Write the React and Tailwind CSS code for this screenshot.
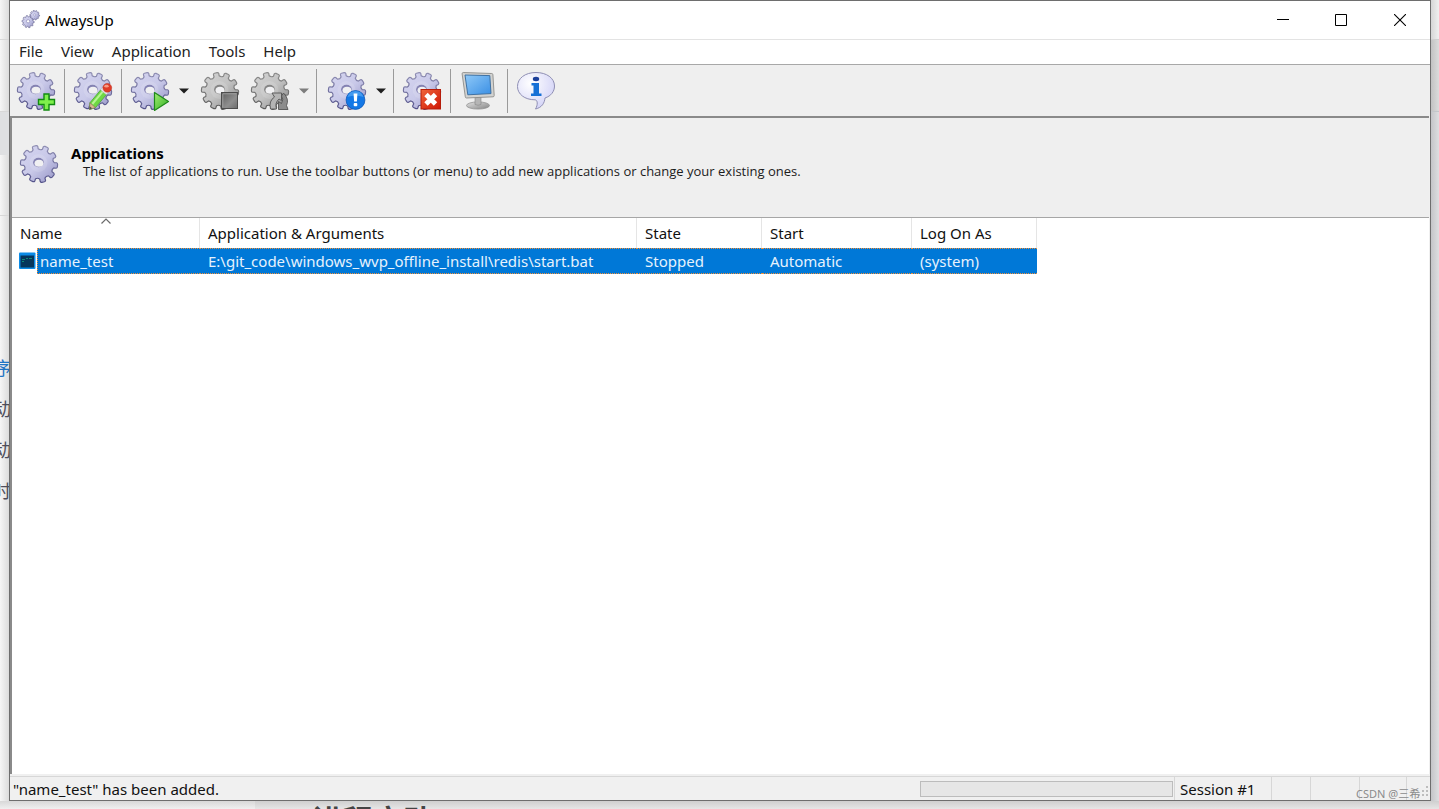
import { useState } from 'react'

const columns = [
  { key: 'name', label: 'Name', cls: 'w-[188px]' },
  { key: 'path', label: 'Application & Arguments', cls: 'w-[437px]' },
  { key: 'state', label: 'State', cls: 'w-[125px]' },
  { key: 'start', label: 'Start', cls: 'w-[150px]' },
  { key: 'logon', label: 'Log On As', cls: 'w-[125px]' },
]

const apps = [
  {
    name: 'name_test',
    path: 'E:\\git_code\\windows_wvp_offline_install\\redis\\start.bat',
    state: 'Stopped',
    start: 'Automatic',
    logon: '(system)',
  },
]

// outline of a ten-toothed wheel around (20,20)
const gearPath = (() => {
  const teeth = 10
  const step = 360 / teeth
  const pt = (r, deg) => {
    const a = (deg * Math.PI) / 180
    return `${(20 + r * Math.cos(a)).toFixed(2)} ${(20 + r * Math.sin(a)).toFixed(2)}`
  }
  let d = ''
  for (let i = 0; i < teeth; i++) {
    const a = i * step - 103
    d += `${i ? 'L' : 'M'}${pt(15.2, a - 10)} L${pt(17.6, a - 9)} Q${pt(18.6, a - 8)} ${pt(18.6, a - 4)} L${pt(18.6, a + 4)} Q${pt(18.6, a + 8)} ${pt(17.6, a + 9)} L${pt(15.2, a + 10)} Q${pt(13.6, a + 18)} ${pt(15.2, a + 26)} `
  }
  return d + 'Z'
})()

function Gear({ gray, children }) {
  const fill = gray ? 'url(#gearGray)' : 'url(#gearBlue)'
  const edge = gray ? 'url(#edgeGray)' : 'url(#edgeBlue)'
  return (
    <svg viewBox="0 0 40 40" className="size-10" aria-hidden="true">
      <path d={gearPath} fill={fill} stroke={edge} strokeWidth="1.2" strokeLinejoin="round" />
      <circle cx="19.5" cy="19" r="9" fill="#fff" fillOpacity="0.12" />
      <ellipse cx="19.5" cy="18.5" rx="5.4" ry="4.7" fill={gray ? '#858585' : '#8482b2'} />
      <ellipse cx="20" cy="19.3" rx="4.5" ry="3.5" fill="#f0f0f2" />
      {children}
    </svg>
  )
}

function Defs() {
  return (
    <svg className="absolute size-0" aria-hidden="true">
      <defs>
        <linearGradient id="gearBlue" x1="0" y1="0" x2="1" y2="1">
          <stop offset="0" stopColor="#d6d6f0" />
          <stop offset="0.5" stopColor="#c9c9e9" />
          <stop offset="1" stopColor="#9392c4" />
        </linearGradient>
        <linearGradient id="gearGray" x1="0" y1="0" x2="1" y2="1">
          <stop offset="0" stopColor="#d6d6d6" />
          <stop offset="0.5" stopColor="#c2c2c2" />
          <stop offset="1" stopColor="#868686" />
        </linearGradient>
        <linearGradient id="edgeBlue" x1="0" y1="0" x2="0" y2="1">
          <stop offset="0" stopColor="#9190b4" />
          <stop offset="1" stopColor="#54538a" />
        </linearGradient>
        <linearGradient id="edgeGray" x1="0" y1="0" x2="0" y2="1">
          <stop offset="0" stopColor="#8e8e8e" />
          <stop offset="1" stopColor="#5c5c5c" />
        </linearGradient>
        <linearGradient id="green" x1="0" y1="0" x2="1" y2="1">
          <stop offset="0" stopColor="#a4ee74" />
          <stop offset="1" stopColor="#2fae22" />
        </linearGradient>
        <linearGradient id="screen" x1="0" y1="0" x2="1" y2="1">
          <stop offset="0" stopColor="#8fc9f8" />
          <stop offset="1" stopColor="#3a8fe4" />
        </linearGradient>
        <linearGradient id="metal" x1="0" y1="0" x2="1" y2="1">
          <stop offset="0" stopColor="#e2e2e2" />
          <stop offset="1" stopColor="#858585" />
        </linearGradient>
        <linearGradient id="square" x1="0" y1="0" x2="1" y2="1">
          <stop offset="0" stopColor="#5e5e5e" />
          <stop offset="0.6" stopColor="#8f8f8f" />
          <stop offset="1" stopColor="#6c6c6c" />
        </linearGradient>
        <linearGradient id="red" x1="0" y1="0" x2="1" y2="1">
          <stop offset="0" stopColor="#f0653c" />
          <stop offset="1" stopColor="#cf1604" />
        </linearGradient>
        <radialGradient id="bubble" cx="0.35" cy="0.3" r="0.8">
          <stop offset="0" stopColor="#ffffff" />
          <stop offset="1" stopColor="#cfcff6" />
        </radialGradient>
      </defs>
    </svg>
  )
}

const AddIcon = () => (
  <Gear>
    <path d="M28 23h5v5.500h5.500v5h-5.500v5.500h-5v-5.500h-5.500v-5h5.500z" fill="#7ff04c" stroke="#128a12" strokeWidth="1.400" />
  </Gear>
)

const EditIcon = () => (
  <Gear>
    <path d="M16.500 38.500l.4-6.700 11.300-13.500 5.600 4.800-11.300 13.500z" fill="#6fd944" stroke="#4aa636" strokeWidth="0.800" />
    <path d="M19.300 33l11.200-13.300" stroke="#b8f494" strokeWidth="2" />
    <path d="M16.500 38.500l.4-6.700 5.600 4.800z" fill="#d9b98e" stroke="#80705c" strokeWidth="0.600" />
    <path d="M16.500 38.500l.2-3 2.500 1.800z" fill="#4b4b4b" />
    <path d="M27.500 18.800l2.600-3.100 5.900 5-2.600 3.100z" fill="#e8e8ec" stroke="#b0b0b8" strokeWidth="0.500" />
    <circle cx="34.300" cy="16.800" r="4.400" fill="#e03c28" stroke="#b72a1c" strokeWidth="0.500" />
    <ellipse cx="33.500" cy="15.200" rx="2.200" ry="1.400" fill="#f69a86" />
  </Gear>
)

const StartIcon = () => (
  <Gear>
    <path d="M24.500 21.500l14 9-14 9z" fill="url(#green)" stroke="#1f8a1a" strokeWidth="1.200" strokeLinejoin="round" />
  </Gear>
)

const StopIcon = () => (
  <Gear gray>
    <rect x="21.500" y="21.500" width="16" height="16" fill="url(#square)" stroke="#4d4d4d" />
    <path d="M22.800 36.300V22.800h13.500" fill="none" stroke="#aaa" strokeWidth="0.800" />
  </Gear>
)

const RestartIcon = () => (
  <Gear gray>
    <path d="M20.500 38q-2-8 4-12l-2.500-4h9.500v7.500l-2.500-1.500q-4.500 4-2.500 10z" fill="#b4b4b4" stroke="#555" strokeWidth="0.900" />
    <path d="M33.500 22q6 6 3 12.500l1.500 4h-9.500v-8l3 2q2.500-4 0-7.500z" fill="#8c8c8c" stroke="#555" strokeWidth="0.900" />
  </Gear>
)

const InfoIcon = () => (
  <Gear>
    <circle cx="28.500" cy="29" r="9.400" fill="#1478e6" stroke="#0a57b8" strokeWidth="0.800" />
    <path d="M20.500 26a8.300 8.300 0 0 1 16 0q-8-2.500-16 0z" fill="#63b0f7" fillOpacity="0.600" />
    <path d="M26.600 22.500h3.800l-.5 8h-2.800z" fill="#fff" />
    <rect x="26.700" y="32" width="3.600" height="3.200" rx="1" fill="#fff" />
  </Gear>
)

const RemoveIcon = () => (
  <Gear>
    <rect x="19" y="18.500" width="19.500" height="19.500" fill="url(#red)" stroke="#b51c0a" />
    <path d="M24 23.500l9.500 9.500M33.500 23.500l-9.500 9.500" stroke="#fff" strokeWidth="4.800" />
  </Gear>
)

const MonitorIcon = () => (
  <svg viewBox="0 0 40 40" className="size-10" aria-hidden="true">
    <ellipse cx="19" cy="34.500" rx="11.500" ry="3.600" fill="url(#metal)" stroke="#8a8a8a" strokeWidth="0.700" />
    <path d="M16 26h6v7.500q-3 1.500-6 0z" fill="#b5b5b5" stroke="#858585" strokeWidth="0.600" />
    <path d="M4.200 1.500l28.600 1q1 .1 1.100 1.100l1.300 20.900q0 1.200-1.100 1.300l-26.600 1.200q-1.100 0-1.200-1.200l-3.200-23q0-1.200 1.100-1.300z" fill="#d2d2d0" stroke="#8c8c8a" strokeWidth="0.900" />
    <path d="M6 4l24.800.6 1.200 18-23.200 1.200z" fill="url(#screen)" stroke="#35699c" strokeWidth="0.900" />
  </svg>
)

const HelpIcon = () => (
  <svg viewBox="0 0 40 40" className="size-10" aria-hidden="true">
    <path
      d="M20 1.500C9 1.500 1.500 7.300 1.500 15.500c0 7.500 7 13.300 17.500 13.300 2.800.2 3 5 .5 9.200 6.500-1.500 9-6 9.500-11C35 25 38.500 20.500 38.500 15 38.500 7 30.500 1.500 20 1.500z"
      fill="url(#bubble)"
      stroke="#8f8fb4"
      strokeWidth="1"
    />
    <ellipse cx="20" cy="8" rx="3.200" ry="2.200" fill="#1c3f9a" />
    <path d="M15.500 12h7.500v10.500h2.500v2.500h-10.500v-2.500h2.500v-8h-2z" fill="#1670d6" />
  </svg>
)

const AppIcon = () => (
  <svg viewBox="0 0 20 20" className="size-5" aria-hidden="true">
    <g transform="translate(0.500 5) scale(0.330)">
      <path d={gearPath} fill="url(#gearBlue)" stroke="#66658f" strokeWidth="2" />
      <circle cx="20" cy="19" r="5" fill="#fff" stroke="#8684b4" strokeWidth="2" />
    </g>
    <g transform="translate(8.500 0) scale(0.260)">
      <path d={gearPath} fill="url(#gearBlue)" stroke="#66658f" strokeWidth="2.500" />
      <circle cx="20" cy="19" r="4" fill="#fff" stroke="#8684b4" strokeWidth="2" />
    </g>
  </svg>
)

const BatIcon = () => (
  <svg viewBox="0 0 18 18" className="size-[18px] shrink-0" aria-hidden="true">
    <rect x="1" y="0.500" width="16.500" height="16.500" rx="1" fill="#0b8be6" />
    <rect x="2.500" y="3.500" width="13.500" height="12" fill="#06365c" />
    <path d="M4 7.500h3M8 6.500h2M11 6.500h3M4 9.500h2" stroke="#0f8a78" strokeWidth="1" />
  </svg>
)

const ToolButton = ({ label, disabled, children, className = '' }) => (
  <button type="button" aria-label={label} disabled={disabled} className={`size-10 shrink-0 ${className}`}>
    {children}
  </button>
)

const Caret = ({ label, disabled }) => (
  <button type="button" aria-label={label} disabled={disabled} className="ml-1.5 flex h-10 w-4 shrink-0 items-center justify-center">
    <svg viewBox="0 0 10 6" className="h-1.5 w-2.5" aria-hidden="true">
      <path d="M0 0.500h10L5 5.500z" fill={disabled ? '#7d7d7d' : '#1f1f1f'} />
    </svg>
  </button>
)

const Divider = ({ className = 'mx-2' }) => <div className={`h-11 w-px shrink-0 bg-[#9a9a9a] ${className}`} />

function TitleBar() {
  return (
    <header className="flex h-[39px] shrink-0 items-center border-b border-[#e3e3e3] bg-white pb-px pl-[11px] pr-px">
      <AppIcon />
      <h1 className="ml-1 flex-1 text-[15px] leading-5 text-black">AlwaysUp</h1>
      <button type="button" aria-label="Minimize" className="flex h-full w-[58px] items-center justify-center">
        <svg viewBox="0 0 12 12" className="size-3"><path d="M0 5.500h12" stroke="#000" /></svg>
      </button>
      <button type="button" aria-label="Maximize" className="flex h-full w-[58px] items-center justify-center">
        <svg viewBox="0 0 12 12" className="size-3"><path d="M.5.5h11v11H.5z" fill="none" stroke="#000" /></svg>
      </button>
      <button type="button" aria-label="Close" className="flex h-full w-[59px] items-center justify-center">
        <svg viewBox="0 0 12 12" className="size-3"><path d="M0 0l12 12M12 0L0 12" stroke="#000" strokeWidth="1.100" /></svg>
      </button>
    </header>
  )
}

function Toolbar() {
  return (
    <div className="flex h-[51px] shrink-0 items-center bg-[#efefef] pl-1.5 pt-px">
      <ToolButton label="Add application"><AddIcon /></ToolButton>
      <Divider />
      <ToolButton label="Edit application"><EditIcon /></ToolButton>
      <Divider className="mx-2" />
      <ToolButton label="Start"><StartIcon /></ToolButton>
      <Caret label="Start options" />
      <ToolButton label="Stop" disabled className="ml-2"><StopIcon /></ToolButton>
      <ToolButton label="Restart" disabled className="ml-2.5"><RestartIcon /></ToolButton>
      <Caret label="Restart options" disabled />
      <Divider className="ml-1 mr-2.5" />
      <ToolButton label="Report activity"><InfoIcon /></ToolButton>
      <Caret label="Report options" />
      <Divider className="ml-1 mr-2" />
      <ToolButton label="Remove application"><RemoveIcon /></ToolButton>
      <Divider />
      <ToolButton label="Switch session"><MonitorIcon /></ToolButton>
      <Divider className="mx-2" />
      <ToolButton label="Help"><HelpIcon /></ToolButton>
    </div>
  )
}

function AppTable() {
  const [selected, setSelected] = useState(0)
  return (
    <table className="w-[1025px] table-fixed border-separate border-spacing-0 text-left text-[15px] leading-5">
      <thead>
        <tr className="h-[30px]">
          {columns.map((c, i) => (
            <th key={c.key} scope="col" className={`relative border-r border-[#e5e5e5] px-2 py-0 font-normal text-[#111] ${c.cls}`}>
              {c.label}
              {i === 0 && (
                <svg viewBox="0 0 10 6" className="absolute left-1/2 top-0 h-1.5 w-2.5 -translate-x-1/2" aria-hidden="true">
                  <path d="M.5 5.500L5 1l4.500 4.500" fill="none" stroke="#6b6b6b" strokeWidth="1.200" />
                </svg>
              )}
            </th>
          ))}
        </tr>
      </thead>
      <tbody>
        {apps.map((app, row) => (
          <tr key={app.name} onClick={() => setSelected(row)} className="h-[26px]">
            {columns.map((c, i) => {
              const on = selected === row
              const look = on ? 'border-y border-dotted border-[#f0903a] bg-[#0078d7] text-[#e6f2fd]' : 'text-[#111]'
              return i === 0 ? (
                <td key={c.key} className="p-0">
                  <div className="flex h-[26px] items-center pl-1.5">
                    <BatIcon />
                    <div className={`ml-px flex h-full flex-1 items-center pl-0.5 ${on ? 'border-l' : ''} ${look}`}>{app.name}</div>
                  </div>
                </td>
              ) : (
                <td key={c.key} className="p-0">
                  <div className={`flex h-[26px] items-center whitespace-nowrap px-2 ${look} ${on ? 'last:border-r-0' : ''}`}>{app[c.key]}</div>
                </td>
              )
            })}
          </tr>
        ))}
      </tbody>
    </table>
  )
}

function StatusBar() {
  return (
    <footer className="flex h-6 shrink-0 items-center border-t border-[#d7d7d7] bg-[#f0f0f0] text-[15px] leading-5 text-[#111]">
      <div className="flex-1 pl-[3px] pt-px">"name_test" has been added.</div>
      <div role="progressbar" aria-label="Progress" className="mt-px h-4 w-[253px] border border-[#bcbcbc] bg-[#e6e6e6]" />
      <div className="ml-px flex h-full w-[97px] items-center border-l border-[#d7d7d7] pl-[5px] pt-px">Session #1</div>
      <div className="h-full w-[39px] border-l border-[#d7d7d7]" />
      <div className="h-full w-[49px] border-l border-[#d7d7d7]" />
      <div className="relative h-full w-[47px] border-l border-[#d7d7d7]">
        <span className="absolute -left-1 top-[7px] whitespace-nowrap text-[11px] leading-5 text-[#8b8b8b]">CSDN @三希</span>
      </div>
      <div className="flex h-full w-6 items-end justify-end border-l border-[#d7d7d7] pb-1 pr-0.5">
        <svg viewBox="0 0 10 10" className="size-2.5" aria-hidden="true">
          <path d="M8 0h2v2H8zM8 4h2v2H8zM8 8h2v2H8zM4 4h2v2H4zM4 8h2v2H4zM0 8h2v2H0z" fill="#bdbdbd" />
        </svg>
      </div>
    </footer>
  )
}

export default function App() {
  return (
    <div className="flex h-screen flex-col overflow-hidden bg-[#e4e4e5] font-['Noto_Sans','Noto_Sans_CJK_SC',sans-serif]">
      <Defs />
      <div className="flex min-h-0 flex-1">
        <aside className="flex w-[9px] shrink-0 flex-col overflow-hidden bg-linear-to-r from-[#f6f6f6] to-[#dcdcdc] text-[18px] leading-[41px] text-[#4d4d5a]">
          <div className="h-10 shrink-0 border-b border-[#d8d8d8]" />
          <div className="h-[71px] shrink-0" />
          <div className="h-11 shrink-0 border-t border-[#d8d8d8] bg-[#dfe0e2]" />
          <div className="h-[61px] shrink-0 border-b border-[#d8d8d8]" />
          <div className="-mr-0.5 flex flex-col items-end pt-[132px]">
            <a href="#order" className="text-[#1f74c4]">序</a>
            <span>动</span>
            <span>动</span>
            <span>时</span>
          </div>
        </aside>

        <main className="flex min-w-0 flex-1 flex-col border border-[#6e6e6e] bg-[#f0f0f0]">
          <TitleBar />
          <nav className="flex h-[25px] shrink-0 items-center border-b border-[#a8a8a8] bg-white pb-0.5 text-[15px] leading-5 text-[#222]">
            {['File', 'View', 'Application', 'Tools', 'Help'].map(m => (
              <button key={m} type="button" className="px-[9px]">{m}</button>
            ))}
          </nav>
          <Toolbar />

          <section className="mr-px flex min-h-0 flex-1 flex-col border-l-2 border-t-2 border-[#8a8a8a] bg-white">
            <div className="flex h-[100px] shrink-0 items-start border-b border-[#a6a6a6] bg-[#efefef] pl-[7px] pt-[26px]">
              <Gear />
              <div className="ml-3">
                <h2 className="text-[15px] font-bold leading-[18px] text-black">Applications</h2>
                <p className="pl-3 font-['Open_Sans',sans-serif] text-[13px] leading-[18px] text-[#1c1c1c]">
                  The list of applications to run. Use the toolbar buttons (or menu) to add new applications or change your existing ones.
                </p>
              </div>
            </div>
            <AppTable />
          </section>
          <div className="h-0.5 shrink-0 bg-[#f0f0f0]" />
          <StatusBar />
        </main>

        <aside className="w-2 shrink-0 bg-linear-to-r from-[#c4c5c8] to-[#dedfe1]">
          <div className="h-10 border-b border-[#cfcfcf] bg-linear-to-r from-[#d6d6d6] to-[#f0f0f0]" />
          <div className="h-[72px] border-b border-[#c3c6ca] bg-linear-to-r from-[#c2c2c2] to-[#dcdcdc]" />
        </aside>
      </div>

      <div className="flex h-2 shrink-0 overflow-hidden bg-linear-to-b from-[#cfcfcf] to-[#e6e6e6]">
        <div className="w-[255px] shrink-0 bg-linear-to-b from-[#d8d8d8] to-[#f0f0f0]" />
        <p className="pl-[58px] pt-px text-[30px] font-bold leading-9 text-[#444]">进程启动</p>
      </div>
    </div>
  )
}
